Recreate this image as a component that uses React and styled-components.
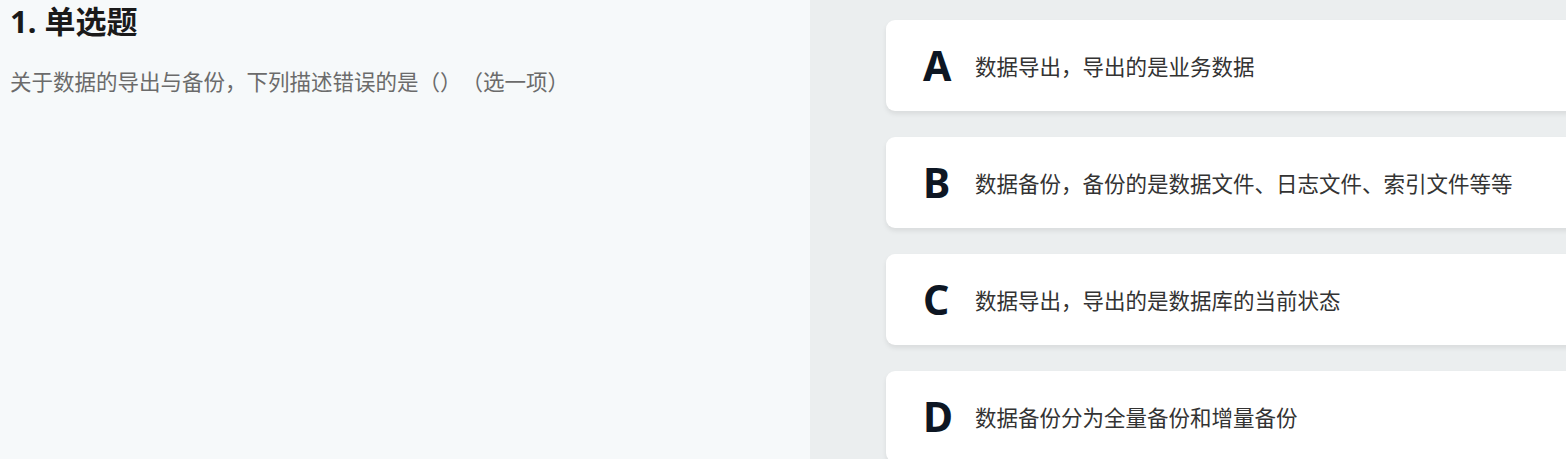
import styled, { createGlobalStyle } from "styled-components"

const GlobalStyle = createGlobalStyle`
    html, body {
        margin: 0;
        padding: 0;
        overflow: hidden;
    }
    body {
        font-family: "Noto Sans", "Noto Sans CJK SC", sans-serif;
        text-spacing-trim: space-all;
    }
`

const options = [
    { id: "A", text: "数据导出，导出的是业务数据" },
    { id: "B", text: "数据备份，备份的是数据文件、日志文件、索引文件等等" },
    { id: "C", text: "数据导出，导出的是数据库的当前状态" },
    { id: "D", text: "数据备份分为全量备份和增量备份" },
]

const Page = styled.div`
    display: grid;
    grid-template-columns: 810px 1fr;
    width: 1566px;
    height: 459px;
    overflow: hidden;
`

const QuestionPane = styled.div`
    background: #f6f9fa;
    padding: 0 10px;
`

const Title = styled.h1`
    margin: 0;
    font-size: 31px;
    line-height: 42px;
    font-weight: 700;
    color: #1a1a1a;
    font-family: "Noto Sans", "Noto Sans CJK SC", sans-serif;
`

const Stem = styled.p`
    margin: 24px 0 0;
    font-size: 21.5px;
    line-height: 30px;
    color: #6b6b6b;
    font-family: "Noto Sans CJK SC", sans-serif;
    text-spacing-trim: space-all;
`

const OptionPane = styled.div`
    background: #ebeeef;
    display: flex;
    flex-direction: column;
    gap: 26px;
    padding: 20px 0 0 76px;
`

const Card = styled.div`
    display: flex;
    align-items: center;
    height: 91px;
    width: calc(100% + 20px);
    box-sizing: border-box;
    padding-left: 37px;
    background: #fff;
    border-radius: 9px;
    box-shadow: 0 3px 5px rgba(0, 0, 0, 0.08);
    flex-shrink: 0;
`

const Letter = styled.span`
    width: 52px;
    font-family: "Noto Sans", sans-serif;
    font-weight: 700;
    font-size: 41px;
    line-height: 1;
    color: #0d1623;
`

const Text = styled.span`
    font-size: 21.5px;
    color: #333;
    font-family: "Noto Sans CJK SC", sans-serif;
    text-spacing-trim: space-all;
`

const App = () => {
    return (
        <Page>
            <GlobalStyle />
            <QuestionPane>
                <Title>1. 单选题</Title>
                <Stem>关于数据的导出与备份，下列描述错误的是（）（选一项）</Stem>
            </QuestionPane>
            <OptionPane>
                {options.map((item) => (
                    <Card key={item.id}>
                        <Letter>{item.id}</Letter>
                        <Text>{item.text}</Text>
                    </Card>
                ))}
            </OptionPane>
        </Page>
    )
}

export default App
